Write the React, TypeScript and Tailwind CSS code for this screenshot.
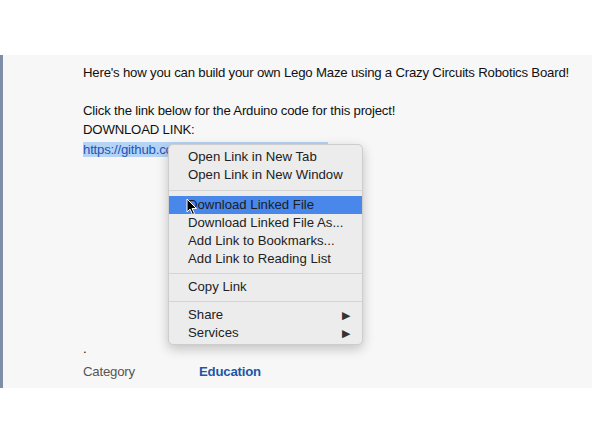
import type { ReactNode } from "react";

const font = { fontFamily: '"Liberation Sans", Arial, sans-serif' };

function MenuItem({ children, active, arrow }: { children: ReactNode; active?: boolean; arrow?: boolean }) {
  return (
    <div
      className={
        "flex h-[18px] items-center justify-between whitespace-nowrap pl-[19px] pr-[12px] text-[13.2px] leading-none " +
        (active ? "bg-[#4a87ea] text-[#1c1c1c]" : "text-[#222]")
      }
    >
      <span>{children}</span>
      {arrow && <span className="text-[11px] text-[#333]">▶</span>}
    </div>
  );
}

function Sep({ h }: { h: string }) {
  return (
    <div className={"flex items-center " + h}>
      <div className="h-px w-full bg-[#d4d4d4]" />
    </div>
  );
}

export default function App() {
  return (
    <div className="relative h-[444px] w-[592px] overflow-hidden bg-white" style={font}>
      <div className="h-[55px]" />
      <div className="h-[333px] whitespace-nowrap border-l-[3px] border-[#7d8ea6] bg-[#f7f7f7] pl-[80px] pt-[8px] text-[13.2px] leading-[19px] tracking-[-0.2px] text-[#111]">
        <p>Here's how you can build your own Lego Maze using a Crazy Circuits Robotics Board!</p>
        <p className="mt-[19px]">Click the link below for the Arduino code for this project!</p>
        <p>DOWNLOAD LINK:</p>
        <p className="mt-[1px]">
          <span className="bg-[#b5d3f5] pr-[2px] text-[#1a56b8]">https://github.com/CrazyCircuits/LegoMaze</span>
        </p>
        <p className="mt-[180px]">.</p>
        <div className="mt-[4px] flex">
          <span className="w-[116px] text-[#555]">Category</span>
          <span className="font-bold text-[#1b57a8]">Education</span>
        </div>
      </div>

      {/* context menu */}
      <div className="absolute left-[168px] top-[144px] w-[195px] rounded-[5px] border border-[#cdcdcd] bg-[#ececec] pb-[2px] pt-[3px] shadow-[0_4px_12px_rgba(0,0,0,0.22)]">
        <MenuItem>Open Link in New Tab</MenuItem>
        <MenuItem>Open Link in New Window</MenuItem>
        <Sep h="h-[12px]" />
        <MenuItem active>Download Linked File</MenuItem>
        <MenuItem>Download Linked File As...</MenuItem>
        <MenuItem>Add Link to Bookmarks...</MenuItem>
        <MenuItem>Add Link to Reading List</MenuItem>
        <Sep h="h-[10px]" />
        <MenuItem>Copy Link</MenuItem>
        <Sep h="h-[10px]" />
        <MenuItem arrow>Share</MenuItem>
        <MenuItem arrow>Services</MenuItem>
      </div>

      {/* cursor */}
      <svg className="absolute left-[186px] top-[198px]" width="12" height="18" viewBox="0 0 12 18">
        <path d="M1 1 L1 14 L4 11 L6.5 16.5 L8.5 15.5 L6 10.5 L10.5 10.5 Z" fill="#000" stroke="#fff" strokeWidth="1" />
      </svg>
    </div>
  );
}
